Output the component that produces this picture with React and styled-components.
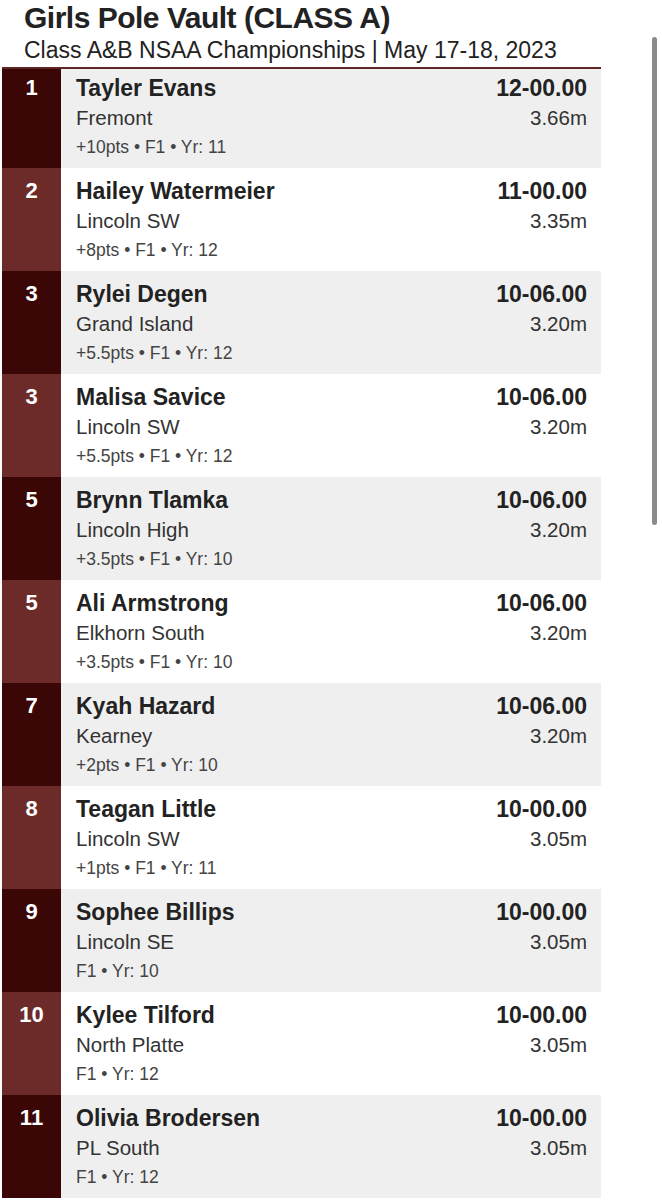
import React from "react";
import styled, { createGlobalStyle } from "styled-components";

const GlobalStyle = createGlobalStyle`
  body {
    margin: 0;
    background: #fff;
    font-family: "Liberation Sans", Arial, Helvetica, sans-serif;
    color: #222;
  }
`;

const Page = styled.div`
  width: 599px;
  margin-left: 2px;
`;

const Header = styled.header`
  padding: 1px 0 0 22px;
  margin-bottom: 2px;
`;

const Title = styled.h1`
  margin: 0;
  font-size: 30px;
  line-height: 34px;
  font-weight: bold;
  letter-spacing: -0.5px;
  color: #222;
`;

const Subtitle = styled.div`
  font-size: 23px;
  line-height: 30px;
  color: #222;
`;

const List = styled.ol`
  list-style: none;
  margin: 0;
  padding: 0;
  border-top: 2px solid #5e2626;
`;

const Row = styled.li`
  display: flex;
  height: 103px;

  &:first-child {
    height: 99px;
  }
`;

const Rank = styled.div`
  width: 59px;
  flex-shrink: 0;
  box-sizing: border-box;
  padding-top: 8px;
  text-align: center;
  font-size: 22px;
  line-height: 30px;
  font-weight: bold;
  color: #fff;
  background: ${({ $odd }) => ($odd ? "#3a0606" : "#6c2b28")};

  ${Row}:first-child & {
    padding-top: 4px;
  }
`;

const Body = styled.div`
  flex: 1;
  box-sizing: border-box;
  padding: 8px 14px 0 15px;
  background: ${({ $odd }) => ($odd ? "#efefef" : "#fff")};

  ${Row}:first-child & {
    padding-top: 4px;
  }
`;

const Line = styled.div`
  display: flex;
  justify-content: space-between;
  align-items: baseline;
`;

const Name = styled.span`
  font-size: 23px;
  line-height: 30px;
  font-weight: bold;
  color: #222;
`;

const Mark = styled.span`
  font-size: 23px;
  line-height: 30px;
  font-weight: bold;
  color: #222;
`;

const Team = styled.span`
  font-size: 20.5px;
  line-height: 29px;
  color: #333;
`;

const Metric = styled.span`
  font-size: 20.5px;
  line-height: 29px;
  color: #333;
`;

const Meta = styled.div`
  font-size: 17.5px;
  line-height: 30px;
  color: #444;
`;

// overlay scroll indicator (iOS style)
const ScrollThumb = styled.div`
  position: fixed;
  top: 37px;
  right: 5px;
  width: 5px;
  height: 488px;
  border-radius: 3px;
  background: #8b8b8b;
`;

const results = [
  { place: 1, name: "Tayler Evans", team: "Fremont", mark: "12-00.00", metric: "3.66m", pts: "+10pts", yr: 11 },
  { place: 2, name: "Hailey Watermeier", team: "Lincoln SW", mark: "11-00.00", metric: "3.35m", pts: "+8pts", yr: 12 },
  { place: 3, name: "Rylei Degen", team: "Grand Island", mark: "10-06.00", metric: "3.20m", pts: "+5.5pts", yr: 12 },
  { place: 3, name: "Malisa Savice", team: "Lincoln SW", mark: "10-06.00", metric: "3.20m", pts: "+5.5pts", yr: 12 },
  { place: 5, name: "Brynn Tlamka", team: "Lincoln High", mark: "10-06.00", metric: "3.20m", pts: "+3.5pts", yr: 10 },
  { place: 5, name: "Ali Armstrong", team: "Elkhorn South", mark: "10-06.00", metric: "3.20m", pts: "+3.5pts", yr: 10 },
  { place: 7, name: "Kyah Hazard", team: "Kearney", mark: "10-06.00", metric: "3.20m", pts: "+2pts", yr: 10 },
  { place: 8, name: "Teagan Little", team: "Lincoln SW", mark: "10-00.00", metric: "3.05m", pts: "+1pts", yr: 11 },
  { place: 9, name: "Sophee Billips", team: "Lincoln SE", mark: "10-00.00", metric: "3.05m", pts: null, yr: 10 },
  { place: 10, name: "Kylee Tilford", team: "North Platte", mark: "10-00.00", metric: "3.05m", pts: null, yr: 12 },
  { place: 11, name: "Olivia Brodersen", team: "PL South", mark: "10-00.00", metric: "3.05m", pts: null, yr: 12 },
];

const App = () => {
  return (
    <Page>
      <GlobalStyle />
      <Header>
        <Title>Girls Pole Vault (CLASS A)</Title>
        <Subtitle>Class A&amp;B NSAA Championships | May 17-18, 2023</Subtitle>
      </Header>
      <List>
        {results.map((r, i) => {
          const odd = i % 2 === 0;
          const meta = [r.pts, "F1", `Yr: ${r.yr}`].filter(Boolean).join(" • ");
          return (
            <Row key={r.name}>
              <Rank $odd={odd}>{r.place}</Rank>
              <Body $odd={odd}>
                <Line>
                  <Name>{r.name}</Name>
                  <Mark>{r.mark}</Mark>
                </Line>
                <Line>
                  <Team>{r.team}</Team>
                  <Metric>{r.metric}</Metric>
                </Line>
                <Meta>{meta}</Meta>
              </Body>
            </Row>
          );
        })}
      </List>
      <ScrollThumb />
    </Page>
  );
};

export default App;
